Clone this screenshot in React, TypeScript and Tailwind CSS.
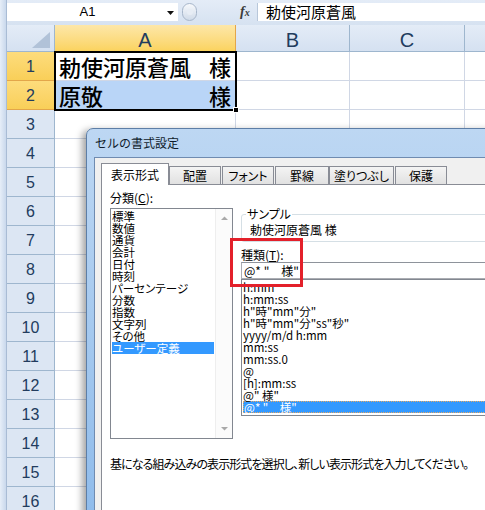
import React from 'react';

const jp = "font-['Noto_Sans_CJK_JP','Liberation_Sans',sans-serif]";

const categories = [
  '標準',
  '数値',
  '通貨',
  '会計',
  '日付',
  '時刻',
  'パーセンテージ',
  '分数',
  '指数',
  '文字列',
  'その他',
  'ユーザー定義',
];

const formats = [
  'h:mm',
  'h:mm:ss',
  'h"時"mm"分"',
  'h"時"mm"分"ss"秒"',
  'yyyy/m/d h:mm',
  'mm:ss',
  'mm:ss.0',
  '@',
  '[h]:mm:ss',
  '@" 様"',
  '@* "　様"',
];

const tabs = [
  { label: '表示形式', cls: 'w-[68px]' },
  { label: '配置', cls: 'w-[52px]' },
  { label: 'フォント', cls: 'ml-[1px] w-[52px]' },
  { label: '罫線', cls: 'ml-[1px] w-[54px]' },
  { label: '塗りつぶし', cls: 'w-[65px]' },
  { label: '保護', cls: 'ml-[1px] w-[52px]' },
];

function FormulaBar() {
  return (
    <div className="flex h-[25px] shrink-0 items-start bg-gradient-to-b from-[#e4ecf7] to-[#d6e2f1] pt-[3px]">
      <div className="flex h-[18px] w-[171px] items-center bg-white">
        <span className="flex-1 pl-[6px] text-center text-[13px] leading-[18px] text-black">A1</span>
        <svg width="16" height="18" viewBox="0 0 16 18" className="shrink-0">
          <path d="M5 8h7l-3.5 4z" fill="#111" />
        </svg>
      </div>
      <div className="ml-[4px] flex h-[18px] w-[15px] items-center justify-center rounded-full border border-[#a7b6ca] bg-gradient-to-b from-[#f7f9fc] to-[#d0dbe9]">
        <div className="h-[6px] w-[6px] rounded-full bg-[#e7edf5]" />
      </div>
      <span className="ml-[43px] w-[14px] font-['Liberation_Serif',serif] text-[14px] font-bold italic leading-[18px] text-[#3a3a3a]">
        f<span className="text-[10px]">x</span>
      </span>
      <div className="ml-[3px] h-[18px] w-px bg-[#b8c7da]" />
      <div className={`flex h-[18px] flex-1 items-center bg-white pl-[8px] text-[15px] leading-[18px] text-black ${jp}`}>
        勅使河原蒼風
      </div>
    </div>
  );
}

function Sheet() {
  const rows = Array.from({ length: 16 }, (_, i) => i + 1);
  return (
    <div className="relative flex flex-col">
      <div className="flex h-[27px] font-['Liberation_Sans',sans-serif] text-[20px] leading-[27px] text-[#223c5e]">
        <div className="relative w-[48px] border-b border-r border-[#9eb6ce] bg-gradient-to-b from-[#e4ecf7] to-[#d5e1f1]">
          <svg width="48" height="27" viewBox="0 0 48 27" className="absolute left-0 top-0">
            <path d="M43 7v16H25z" fill="#b1c2d8" />
          </svg>
        </div>
        <div className="w-[181px] border-b border-r border-[#e3a64a] bg-gradient-to-b from-[#fde7a8] to-[#fbd35e] pt-[2px] text-center">A</div>
        <div className="w-[114px] border-b border-r border-[#9eb6ce] bg-gradient-to-b from-[#e4ecf7] to-[#d5e1f1] pt-[2px] text-center">B</div>
        <div className="w-[115px] border-b border-r border-[#9eb6ce] bg-gradient-to-b from-[#e4ecf7] to-[#d5e1f1] pt-[2px] text-center">C</div>
        <div className="flex-1 border-b border-[#9eb6ce] bg-gradient-to-b from-[#e4ecf7] to-[#d5e1f1]" />
      </div>
      {rows.map((r) => {
        const sel = r <= 2;
        return (
          <div key={r} className="flex h-[29px] shrink-0">
            <div
              className={
                sel
                  ? 'w-[48px] border-b border-r border-[#e3a64a] bg-gradient-to-b from-[#fddc7c] to-[#f9cf58] text-center text-[16px] leading-[29px] text-[#223c5e]'
                  : 'w-[48px] border-b border-r border-[#9eb6ce] bg-[#dce6f3] text-center text-[16px] leading-[29px] text-[#223c5e]'
              }
            >
              {r}
            </div>
            <div
              className={
                r === 2
                  ? `flex w-[181px] items-center justify-between border-b border-r border-[#d0d7e5] bg-[#b9d5f7] pl-[4px] pr-[4px] text-[22px] font-medium leading-[29px] text-black ${jp}`
                  : `flex w-[181px] items-center justify-between border-b border-r border-[#d0d7e5] pl-[4px] pr-[4px] text-[22px] font-medium leading-[29px] text-black ${jp}`
              }
            >
              {r === 1 && (
                <>
                  <span>勅使河原蒼風</span>
                  <span>様</span>
                </>
              )}
              {r === 2 && (
                <>
                  <span>原敬</span>
                  <span>様</span>
                </>
              )}
            </div>
            <div className="w-[114px] border-b border-r border-[#d0d7e5]" />
            <div className="w-[115px] border-b border-r border-[#d0d7e5]" />
            <div className="flex-1 border-b border-[#d0d7e5]" />
          </div>
        );
      })}
      {/* selection frame A1:A2 */}
      <div className="pointer-events-none absolute left-[47px] top-[26px] h-[60px] w-[183px] border-2 border-black">
        <div className="absolute -bottom-[4px] -right-[4px] h-[6px] w-[6px] border border-white bg-black" />
      </div>
    </div>
  );
}

function FormatDialog() {
  return (
    <div className={`absolute left-[86px] top-[128px] h-[400px] w-[420px] rounded-tl-[7px] border border-[#5d7ea6] bg-gradient-to-b from-[#bdd7f3] via-[#a5c9ef] to-[#8ebbeb] shadow-[-4px_2px_7px_rgba(0,0,0,0.35)] ${jp}`}>
      <div className="flex h-[28px] items-center pl-[8px] text-[12px] text-[#101c2c]">セルの書式設定</div>
      <div className="ml-[7px] h-full border-l border-t border-[#6f8bb0] bg-[#f0f0f0] pl-[6px] pt-[5px]">
        <div className="flex h-[21px] items-end [font-feature-settings:'palt']">
          {tabs.map((t, i) =>
            i === 0 ? (
              <div
                key={t.label}
                className={`relative z-10 -mb-px h-[22px] border-l border-r border-t border-[#898c95] bg-white text-center text-[12px] leading-[22px] text-black ${t.cls}`}
              >
                {t.label}
              </div>
            ) : (
              <div
                key={t.label}
                className={`h-[18px] border-l border-r border-t border-[#898c95] bg-gradient-to-b from-[#f4f4f4] to-[#e1e1e1] text-center text-[12px] leading-[18px] text-black ${t.cls}`}
              >
                {t.label}
              </div>
            ),
          )}
        </div>
        <div className="relative h-[340px] border border-[#898c95] bg-white text-[12px] text-black">
          <div className="flex">
            <div className="ml-[8px] w-[123px] pt-[6px]">
              <div className="h-[14px] leading-[14px]">
                分類(<u>C</u>):
              </div>
              <div className="mt-[3px] flex h-[231px] border border-[#828790] bg-white">
                <div className="flex-1 pl-[1px] pt-[1px] text-[11.5px] [font-feature-settings:'palt']">
                  {categories.map((c, i) => (
                    <div
                      key={c}
                      className={
                        i === categories.length - 1
                          ? 'mr-[1px] h-[12px] bg-[#3399ff] leading-[12px] text-white'
                          : 'h-[12px] leading-[12px]'
                      }
                    >
                      {c}
                    </div>
                  ))}
                </div>
                <div className="flex w-[17px] flex-col justify-between border-l border-[#eeeeee] bg-[#fbfbfb] py-[6px]">
                  <svg width="16" height="6" viewBox="0 0 16 6">
                    <path d="M5 5h7L8.5 1.5z" fill="#a9a9a9" />
                  </svg>
                  <svg width="16" height="6" viewBox="0 0 16 6">
                    <path d="M5 1h7L8.5 4.5z" fill="#a9a9a9" />
                  </svg>
                </div>
              </div>
            </div>
            <div className="ml-[8px] w-[262px] pt-[29px]">
              <div className="relative h-[28px] rounded-[3px] border border-[#d5dfe5] pl-[8px] pt-[9px] leading-[12px]">
                <span className="absolute -top-[8px] left-[4px] bg-white px-[1px] leading-[14px] [font-feature-settings:'palt']">
                  サンプル
                </span>
                勅使河原蒼風 様
              </div>
              <div className="mt-[6px] h-[13px] leading-[13px]">
                種類(<u>T</u>):
              </div>
              <div className="mt-[1px] h-[17px] border border-[#abadb3] border-t-[#8e939b] pl-[2px] leading-[15px]">
                {'@* "　様"'}
              </div>
              <div className="h-[137px] border border-[#828790] pl-[1px] pt-[1px] text-[11.5px]">
                {formats.map((f, i) => (
                  <div
                    key={f}
                    className={
                      i === formats.length - 1
                        ? 'h-[12px] border border-dotted border-[#e8a860] bg-[#3399ff] leading-[10px] text-white'
                        : 'h-[12px] leading-[12px]'
                    }
                  >
                    {f}
                  </div>
                ))}
              </div>
            </div>
          </div>
          <div className="ml-[8px] mt-[18px] whitespace-nowrap leading-[14px] tracking-[-0.9px] [font-feature-settings:'palt']">
            基になる組み込みの表示形式を選択し、新しい表示形式を入力してください。
          </div>
          <div className="pointer-events-none absolute left-[128px] top-[53px] h-[49px] w-[73px] border-[3px] border-[#e3202a]" />
        </div>
      </div>
    </div>
  );
}

export default function App() {
  return (
    <div className="relative flex h-[510px] w-[485px] overflow-hidden bg-white font-['Liberation_Sans',sans-serif]">
      <div className="w-[7px] shrink-0 border-r border-[#a9bcd5] bg-gradient-to-r from-[#e6eef8] to-[#c9d8ec]" />
      <div className="flex min-w-0 flex-1 flex-col">
        <FormulaBar />
        <Sheet />
      </div>
      <FormatDialog />
    </div>
  );
}
